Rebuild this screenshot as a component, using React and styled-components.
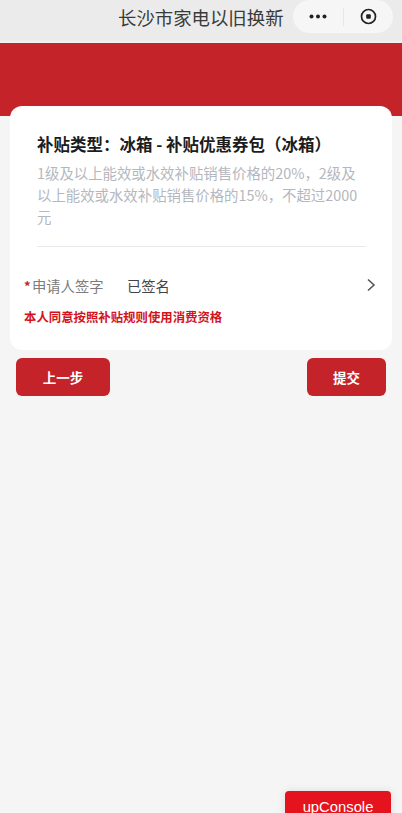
import React from 'react';
import styled, { createGlobalStyle } from 'styled-components';

const GlobalStyle = createGlobalStyle`
  html, body {
    margin: 0;
    padding: 0;
    height: 100%;
    background: #f5f5f5;
  }
  * { box-sizing: border-box; }
  body {
    font-family: "Noto Sans CJK SC", "Liberation Sans", sans-serif;
    overflow: hidden;
  }
`;

const Page = styled.div`
  position: relative;
  width: 402px;
  height: 813px;
  overflow: hidden;
  background: #f5f5f5;
`;

const NavBar = styled.div`
  height: 43px;
  padding: 0 9px 0 118px;
  display: flex;
  align-items: flex-start;
  justify-content: space-between;
  background: #ebebeb;
  border-bottom: 2px solid #f0f0f0;
`;

const NavTitle = styled.div`
  font-size: 18.4px;
  line-height: 34px;
  color: #3a3a3a;
  white-space: nowrap;
`;

const Capsule = styled.div`
  width: 100px;
  height: 33px;
  border-radius: 17px;
  background: #f6f6f6;
  display: flex;
  align-items: center;
`;

const CapsuleSlot = styled.div`
  flex: 1;
  display: flex;
  align-items: center;
  justify-content: center;
  height: 18px;
  & + & { border-left: 1px solid #e6e6e6; }
`;

const Hero = styled.div`
  height: 73px;
  background: #c42429;
`;

const Card = styled.section`
  position: relative;
  margin: -10px 10px 0;
  height: 244px;
  padding: 27px 26px 0 14px;
  background: #fff;
  border-radius: 12px;
`;

const CardIntro = styled.div`
  margin-left: 13px;
  padding-bottom: 18px;
  border-bottom: 1px solid #e9e9e9;
`;

const CardTitle = styled.h2`
  margin: 0;
  font-size: 16.5px;
  line-height: 22px;
  font-weight: 700;
  color: #1c1c1c;
  white-space: nowrap;
`;

const CardDesc = styled.p`
  margin: 7px 0 0;
  font-size: 14.4px;
  line-height: 22px;
  color: #b4b7bd;
`;

const SignRow = styled.div`
  margin-top: 26px;
  height: 24px;
  display: flex;
  align-items: center;
  font-size: 14.3px;
`;

const Star = styled.span`
  width: 8px;
  color: #c42429;
  font-weight: 700;
  font-size: 13px;
  line-height: 1;
`;

const SignLabel = styled.span`
  width: 95px;
  color: #7c7c7c;
`;

const SignValue = styled.span`
  flex: 1;
  color: #444;
`;

const Chevron = styled.svg`
  width: 10px;
  height: 14px;
  margin-right: -10px;
`;

const Consent = styled.div`
  margin-top: 12px;
  font-size: 12.4px;
  line-height: 16px;
  font-weight: 700;
  color: #d3141c;
  white-space: nowrap;
`;

const Actions = styled.div`
  margin-top: 8px;
  padding: 0 16px;
  display: flex;
  justify-content: space-between;
`;

const ActionButton = styled.button`
  width: ${(p) => p.$width}px;
  height: 38px;
  border: 0;
  padding: 0;
  border-radius: 6px;
  background: #c42429;
  color: #fff;
  font-family: inherit;
  font-size: 13.5px;
  font-weight: 700;
`;

const ConsoleButton = styled.div`
  position: absolute;
  left: 285px;
  top: 791px;
  width: 106px;
  height: 34px;
  padding-top: 7px;
  border-radius: 4px;
  background: #e5131d;
  box-shadow: 0 0 8px rgba(0, 0, 0, 0.1);
  color: #fff;
  font-family: "Liberation Sans", sans-serif;
  font-size: 14.8px;
  line-height: 18px;
  text-align: center;
`;

export default function App() {
  return (
    <Page>
      <GlobalStyle />
      <NavBar>
        <NavTitle>长沙市家电以旧换新</NavTitle>
        <Capsule>
          <CapsuleSlot>
            <svg width="18" height="5" viewBox="0 0 18 5">
              <circle cx="2.5" cy="2.5" r="2" fill="#222" />
              <circle cx="9" cy="2.5" r="2" fill="#222" />
              <circle cx="15.5" cy="2.5" r="2" fill="#222" />
            </svg>
          </CapsuleSlot>
          <CapsuleSlot>
            <svg width="17" height="17" viewBox="0 0 17 17">
              <circle cx="8.5" cy="8.5" r="7" fill="none" stroke="#222" strokeWidth="1.7" />
              <rect x="6.2" y="6.2" width="4.6" height="4.6" rx="1" fill="#222" />
            </svg>
          </CapsuleSlot>
        </Capsule>
      </NavBar>
      <Hero />
      <Card>
        <CardIntro>
          <CardTitle>补贴类型：冰箱 - 补贴优惠券包（冰箱）</CardTitle>
          <CardDesc>
            1级及以上能效或水效补贴销售价格的20%，2级及以上能效或水效补贴销售价格的15%，不超过2000元
          </CardDesc>
        </CardIntro>
        <SignRow>
          <Star>*</Star>
          <SignLabel>申请人签字</SignLabel>
          <SignValue>已签名</SignValue>
          <Chevron viewBox="0 0 10 14">
            <path d="M2 1.5 L8 7 L2 12.5" fill="none" stroke="#555" strokeWidth="1.6" />
          </Chevron>
        </SignRow>
        <Consent>本人同意按照补贴规则使用消费资格</Consent>
      </Card>
      <Actions>
        <ActionButton $width={94}>上一步</ActionButton>
        <ActionButton $width={79}>提交</ActionButton>
      </Actions>
      <ConsoleButton>upConsole</ConsoleButton>
    </Page>
  );
}
